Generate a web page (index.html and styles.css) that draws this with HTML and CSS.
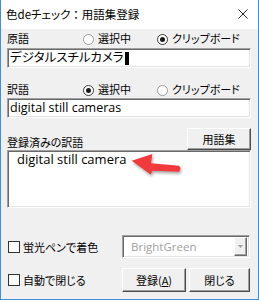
FILE: index.html
```html
<!DOCTYPE html>
<html lang="ja">
<head>
<meta charset="utf-8">
<link rel="stylesheet" href="styles.css">
</head>
<body>
<div class="window">
  <div class="titlebar">
    <span class="title">色deチェック<span class="colon">：</span>用語集登録</span>
    <svg class="close" viewBox="0 0 10 10" width="10" height="10"><path d="M0.5 0.5L9.5 9.5M9.5 0.5L0.5 9.5" stroke="#2b2b2b" stroke-width="1" fill="none"/></svg>
  </div>
  <div class="content">
    <div class="head">
      <span class="label">原語</span>
      <span class="radio"><span class="circle"></span>選択中</span>
      <span class="radio"><span class="circle on"></span>クリップボード</span>
    </div>
    <div class="field sunken">デジタルスチルカメラ<span class="caret"></span></div>

    <div class="head head2">
      <span class="label">訳語</span>
      <span class="radio"><span class="circle on"></span>選択中</span>
      <span class="radio"><span class="circle"></span>クリップボード</span>
    </div>
    <div class="field field2 sunken">digital still cameras</div>

    <div class="listhead">
      <span class="label">登録済みの訳語</span>
      <span class="btn btn-glossary">用語集</span>
    </div>
    <div class="memo-wrap">
      <div class="memo sunken">digital still camera</div>
      <svg class="arrow" viewBox="0 0 60 30" width="60" height="30"><polygon points="2.7,10.7 23.3,4 22,13.3 50,15.7 51.7,18.3 50,21.7 23.3,20.7 21.7,24.5" fill="#f23a3c"/></svg>
    </div>

    <div class="options">
      <span class="check"><span class="box"></span>蛍光ペンで着色</span>
      <div class="combo sunken"><span class="combo-text">BrightGreen</span><span class="drop"><svg viewBox="0 0 5 3" width="5" height="3"><polygon points="0,0 5,0 2.5,3" fill="#a0a0a0"/></svg></span></div>
      <span class="check"><span class="box"></span>自動で閉じる</span>
      <div class="buttons">
        <span class="btn btn-reg">登録(<u>A</u>)</span>
        <span class="btn btn-close">閉じる</span>
      </div>
    </div>
  </div>
</div>
</body>
</html>
```
FILE: styles.css
```css
html, body {
  margin: 0;
  padding: 0;
}
body {
  width: 259px;
  height: 300px;
  font-family: "Noto Sans CJK JP", "Noto Sans", sans-serif;
  font-size: 11px;
  color: #000;
  font-feature-settings: "palt";
  overflow: hidden;
}
.window {
  box-sizing: border-box;
  width: 259px;
  height: 300px;
  border: 1px solid #3f8fdc;
  border-top: 0;
  background: #f0f0f0;
  display: flex;
  flex-direction: column;
}
.titlebar {
  flex: none;
  height: 29px;
  background: #fff;
  display: flex;
  align-items: center;
  justify-content: space-between;
  padding: 0 10px 0 5px;
}
.title {
  font-size: 11.5px;
  line-height: 29px;
}
.colon {
  font-feature-settings: normal;
}
.close {
  display: block;
  margin-top: -1px;
}
.content {
  flex: 1;
  display: flex;
  flex-direction: column;
  padding: 2px 7px 0 6px;
}
.head {
  display: grid;
  grid-template-columns: 76px 74px 1fr;
  align-items: center;
  height: 14px;
  line-height: 14px;
}
.head2 {
  margin-top: 14px;
}
.radio {
  display: flex;
  align-items: center;
  gap: 4px;
  white-space: nowrap;
}
.circle {
  box-sizing: border-box;
  width: 11px;
  height: 11px;
  border-radius: 50%;
  border: 1px solid #9a9a9a;
  background: #fff;
  display: flex;
  align-items: center;
  justify-content: center;
  margin-top: 2px;
}
.circle.on {
  border-color: #3a3a3a;
}
.circle.on::after {
  content: "";
  width: 5px;
  height: 5px;
  border-radius: 50%;
  background: #1a1a1a;
}
.sunken {
  box-sizing: border-box;
  border: 1px solid;
  border-color: #a0a0a0 #fff #fff #a0a0a0;
  box-shadow: inset 1px 1px #696969, inset -1px -1px #e3e3e3;
  background: #fff;
}
.field {
  margin-top: 3px;
  height: 20px;
  padding-left: 2px;
  font-family: "Open Sans", "Noto Sans CJK JP", sans-serif;
  font-size: 12.5px;
  line-height: 18px;
  display: flex;
  align-items: center;
  white-space: nowrap;
}
.field2 {
  margin-top: 2px;
}
.caret {
  display: inline-block;
  width: 4px;
  height: 13px;
  background: #000;
  margin-left: 1px;
}
.listhead {
  margin-top: 10px;
  height: 22px;
  display: flex;
  justify-content: space-between;
  align-items: flex-end;
}
.listhead .label {
  line-height: 14px;
  margin-bottom: 1px;
}
.btn {
  box-sizing: border-box;
  display: flex;
  align-items: center;
  justify-content: center;
  background: #f0f0f0;
  border: 1px solid;
  border-color: #fff #4a4a4a #4a4a4a #fff;
  box-shadow: inset -1px -1px #a0a0a0;
  font-size: 11px;
  white-space: nowrap;
}
.btn-glossary {
  width: 64px;
  height: 22px;
}
.memo-wrap {
  position: relative;
  height: 58px;
}
.memo {
  height: 58px;
  padding: 1px 0 0 9px;
  font-family: "Open Sans", "Noto Sans CJK JP", sans-serif;
  font-size: 13px;
  line-height: 15px;
}
.arrow {
  position: absolute;
  left: 122px;
  top: 0;
  filter: drop-shadow(1px 2px 1.5px rgba(0, 0, 0, 0.35));
}
.options {
  margin-top: 27px;
  display: grid;
  grid-template-columns: 115px 128px;
  grid-template-rows: 23px 24px;
  row-gap: 10px;
  align-items: center;
}
.check {
  display: flex;
  align-items: center;
  gap: 3px;
  padding-left: 1px;
  white-space: nowrap;
}
.box {
  box-sizing: border-box;
  width: 12px;
  height: 12px;
  border: 1px solid #333;
  background: #fff;
}
.combo {
  height: 23px;
  display: flex;
  align-items: center;
  padding: 0 2px 0 8px;
}
.combo-text {
  flex: 1;
  color: #a0a0a0;
  font-family: "Open Sans", "Noto Sans CJK JP", sans-serif;
  font-size: 11.5px;
}
.drop {
  box-sizing: border-box;
  width: 13px;
  height: 19px;
  display: flex;
  align-items: center;
  justify-content: center;
  background: #f0f0f0;
  border: 1px solid;
  border-color: #fff #696969 #696969 #fff;
  box-shadow: inset -1px -1px #a0a0a0;
}
.buttons {
  display: flex;
  justify-content: space-between;
  height: 24px;
}
.btn-reg {
  width: 64px;
  height: 24px;
}
.btn-close {
  width: 61px;
  height: 24px;
}
```
